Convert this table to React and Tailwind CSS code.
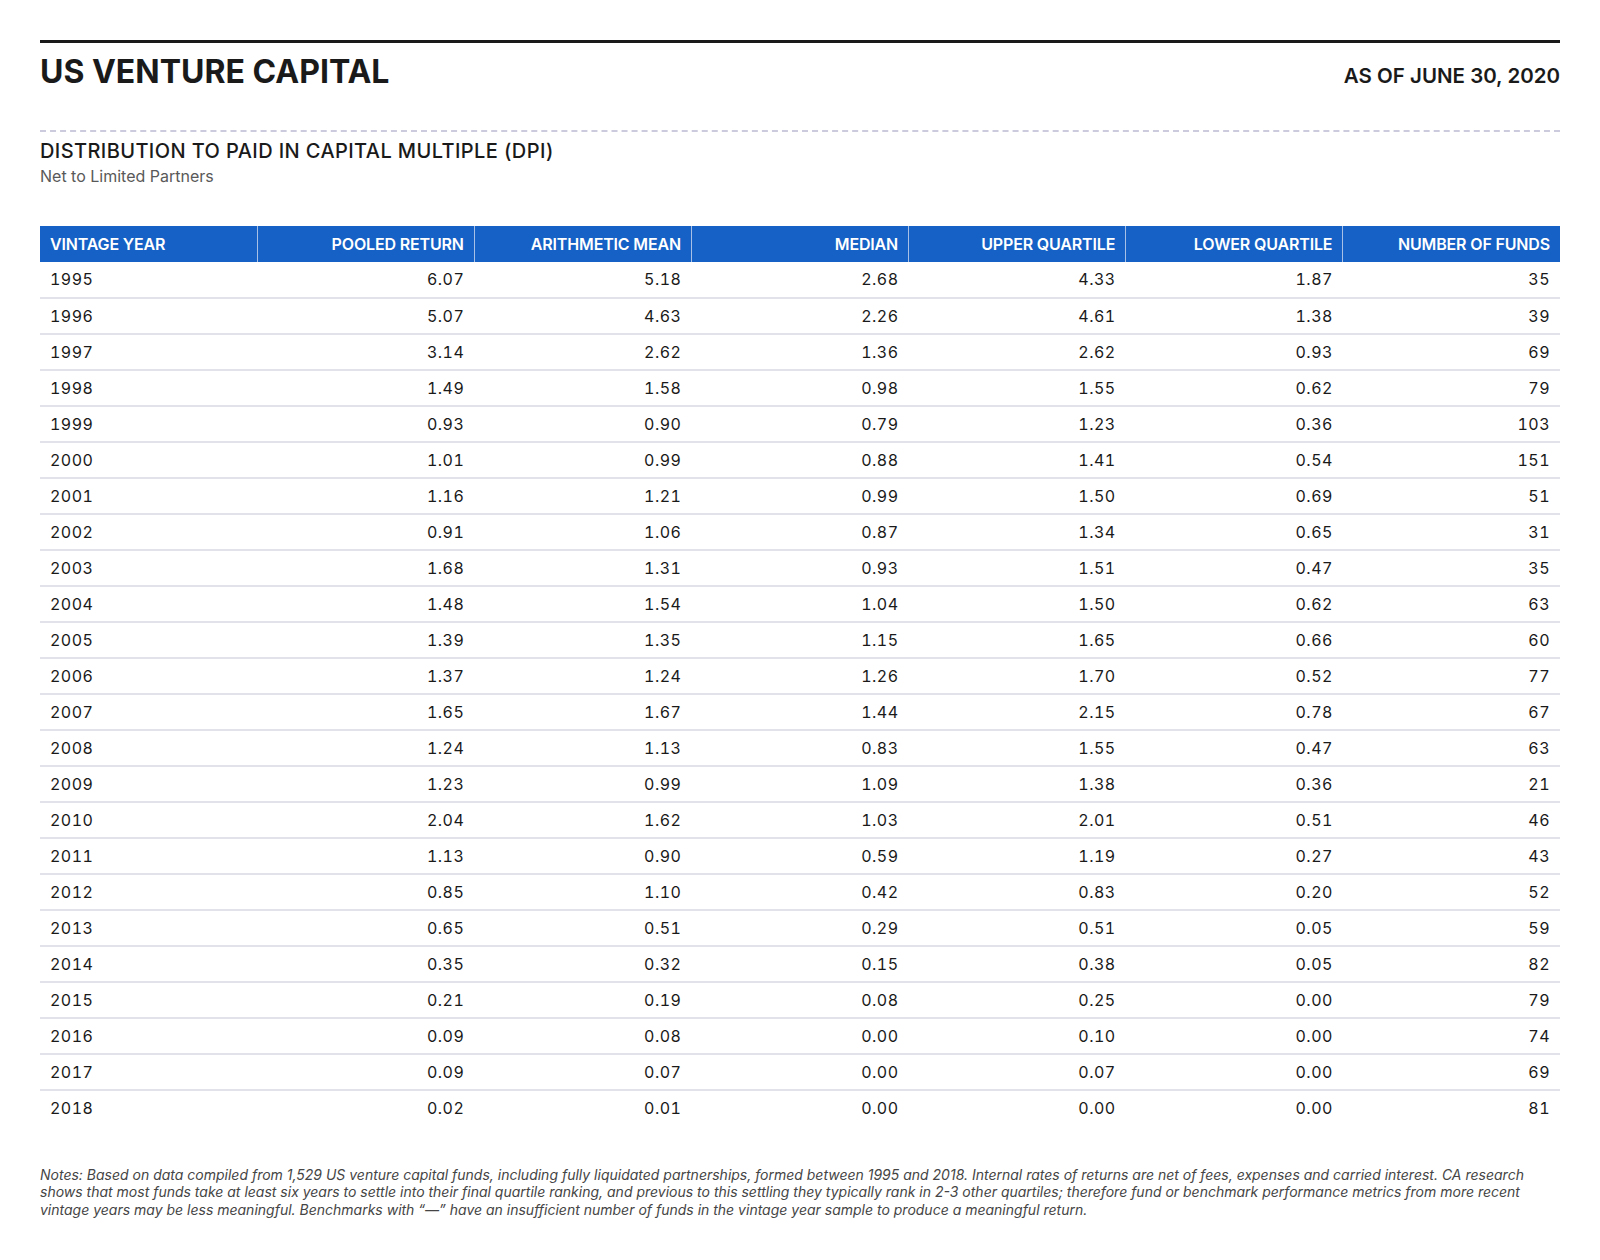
import React from 'react';

const columns = [
  'Vintage Year',
  'Pooled Return',
  'Arithmetic Mean',
  'Median',
  'Upper Quartile',
  'Lower Quartile',
  'Number of Funds',
];

const rows = [
  ['1995', '6.07', '5.18', '2.68', '4.33', '1.87', '35'],
  ['1996', '5.07', '4.63', '2.26', '4.61', '1.38', '39'],
  ['1997', '3.14', '2.62', '1.36', '2.62', '0.93', '69'],
  ['1998', '1.49', '1.58', '0.98', '1.55', '0.62', '79'],
  ['1999', '0.93', '0.90', '0.79', '1.23', '0.36', '103'],
  ['2000', '1.01', '0.99', '0.88', '1.41', '0.54', '151'],
  ['2001', '1.16', '1.21', '0.99', '1.50', '0.69', '51'],
  ['2002', '0.91', '1.06', '0.87', '1.34', '0.65', '31'],
  ['2003', '1.68', '1.31', '0.93', '1.51', '0.47', '35'],
  ['2004', '1.48', '1.54', '1.04', '1.50', '0.62', '63'],
  ['2005', '1.39', '1.35', '1.15', '1.65', '0.66', '60'],
  ['2006', '1.37', '1.24', '1.26', '1.70', '0.52', '77'],
  ['2007', '1.65', '1.67', '1.44', '2.15', '0.78', '67'],
  ['2008', '1.24', '1.13', '0.83', '1.55', '0.47', '63'],
  ['2009', '1.23', '0.99', '1.09', '1.38', '0.36', '21'],
  ['2010', '2.04', '1.62', '1.03', '2.01', '0.51', '46'],
  ['2011', '1.13', '0.90', '0.59', '1.19', '0.27', '43'],
  ['2012', '0.85', '1.10', '0.42', '0.83', '0.20', '52'],
  ['2013', '0.65', '0.51', '0.29', '0.51', '0.05', '59'],
  ['2014', '0.35', '0.32', '0.15', '0.38', '0.05', '82'],
  ['2015', '0.21', '0.19', '0.08', '0.25', '0.00', '79'],
  ['2016', '0.09', '0.08', '0.00', '0.10', '0.00', '74'],
  ['2017', '0.09', '0.07', '0.00', '0.07', '0.00', '69'],
  ['2018', '0.02', '0.01', '0.00', '0.00', '0.00', '81'],
];

export default function App() {
  return (
    <div
      className="min-h-[1260px] bg-white px-[40px] pt-[40px] text-[#1a1a1a]"
      style={{ fontFamily: 'Inter, "Liberation Sans", sans-serif' }}
    >
      {/* Header */}
      <div className="border-t-[3px] border-[#1a1a1a] pt-[10px]">
        <div className="flex items-baseline justify-between">
          <h1 className="text-[32px] font-bold leading-[38px]">US VENTURE CAPITAL</h1>
          <span className="text-[20.5px] font-semibold">AS OF JUNE 30, 2020</span>
        </div>
      </div>

      <div className="mt-[38px] border-t-2 border-dashed border-[#cbcbdd]" />

      <div className="pt-[7px]">
        <h2 className="text-[20px] font-medium leading-[24px] tracking-[0.02em]">
          DISTRIBUTION TO PAID IN CAPITAL MULTIPLE (DPI)
        </h2>
        <p className="mt-[2px] text-[16px] leading-[22px] text-[#595959]">Net to Limited Partners</p>
      </div>

      {/* Table */}
      <table className="mt-[39px] w-full table-fixed border-collapse">
        <thead>
          <tr className="h-[36px] bg-[#1561c5] text-white">
            {columns.map((c, i) => (
              <th
                key={c}
                className={`px-[10px] text-[16px] font-semibold uppercase tracking-[-0.01em] ${
                  i === 0 ? 'text-left' : 'border-l border-[#a8c0e6] text-right'
                }`}
              >
                {c}
              </th>
            ))}
          </tr>
        </thead>
        <tbody>
          {rows.map((r, ri) => (
            <tr
              key={r[0]}
              className={`h-[36px] ${ri === rows.length - 1 ? '' : 'border-b-2 border-[#e2e2ea]'}`}
            >
              {r.map((v, i) => (
                <td
                  key={i}
                  className={`px-[10px] text-[16px] tabular-nums tracking-[0.03em] ${
                    i === 0 ? 'text-left' : 'text-right'
                  }`}
                >
                  {v}
                </td>
              ))}
            </tr>
          ))}
        </tbody>
      </table>

      {/* Notes */}
      <p className="mt-[40px] text-[14px] italic leading-[17.5px] text-[#454545]">
        Notes: Based on data compiled from 1,529 US venture capital funds, including fully liquidated partnerships, formed
        between 1995 and 2018. Internal rates of returns are net of fees, expenses and carried interest. CA research shows
        that most funds take at least six years to settle into their final quartile ranking, and previous to this settling
        they typically rank in 2-3 other quartiles; therefore fund or benchmark performance metrics from more recent vintage
        years may be less meaningful. Benchmarks with “—” have an insufficient number of funds in the vintage year sample to
        produce a meaningful return.
      </p>
    </div>
  );
}
